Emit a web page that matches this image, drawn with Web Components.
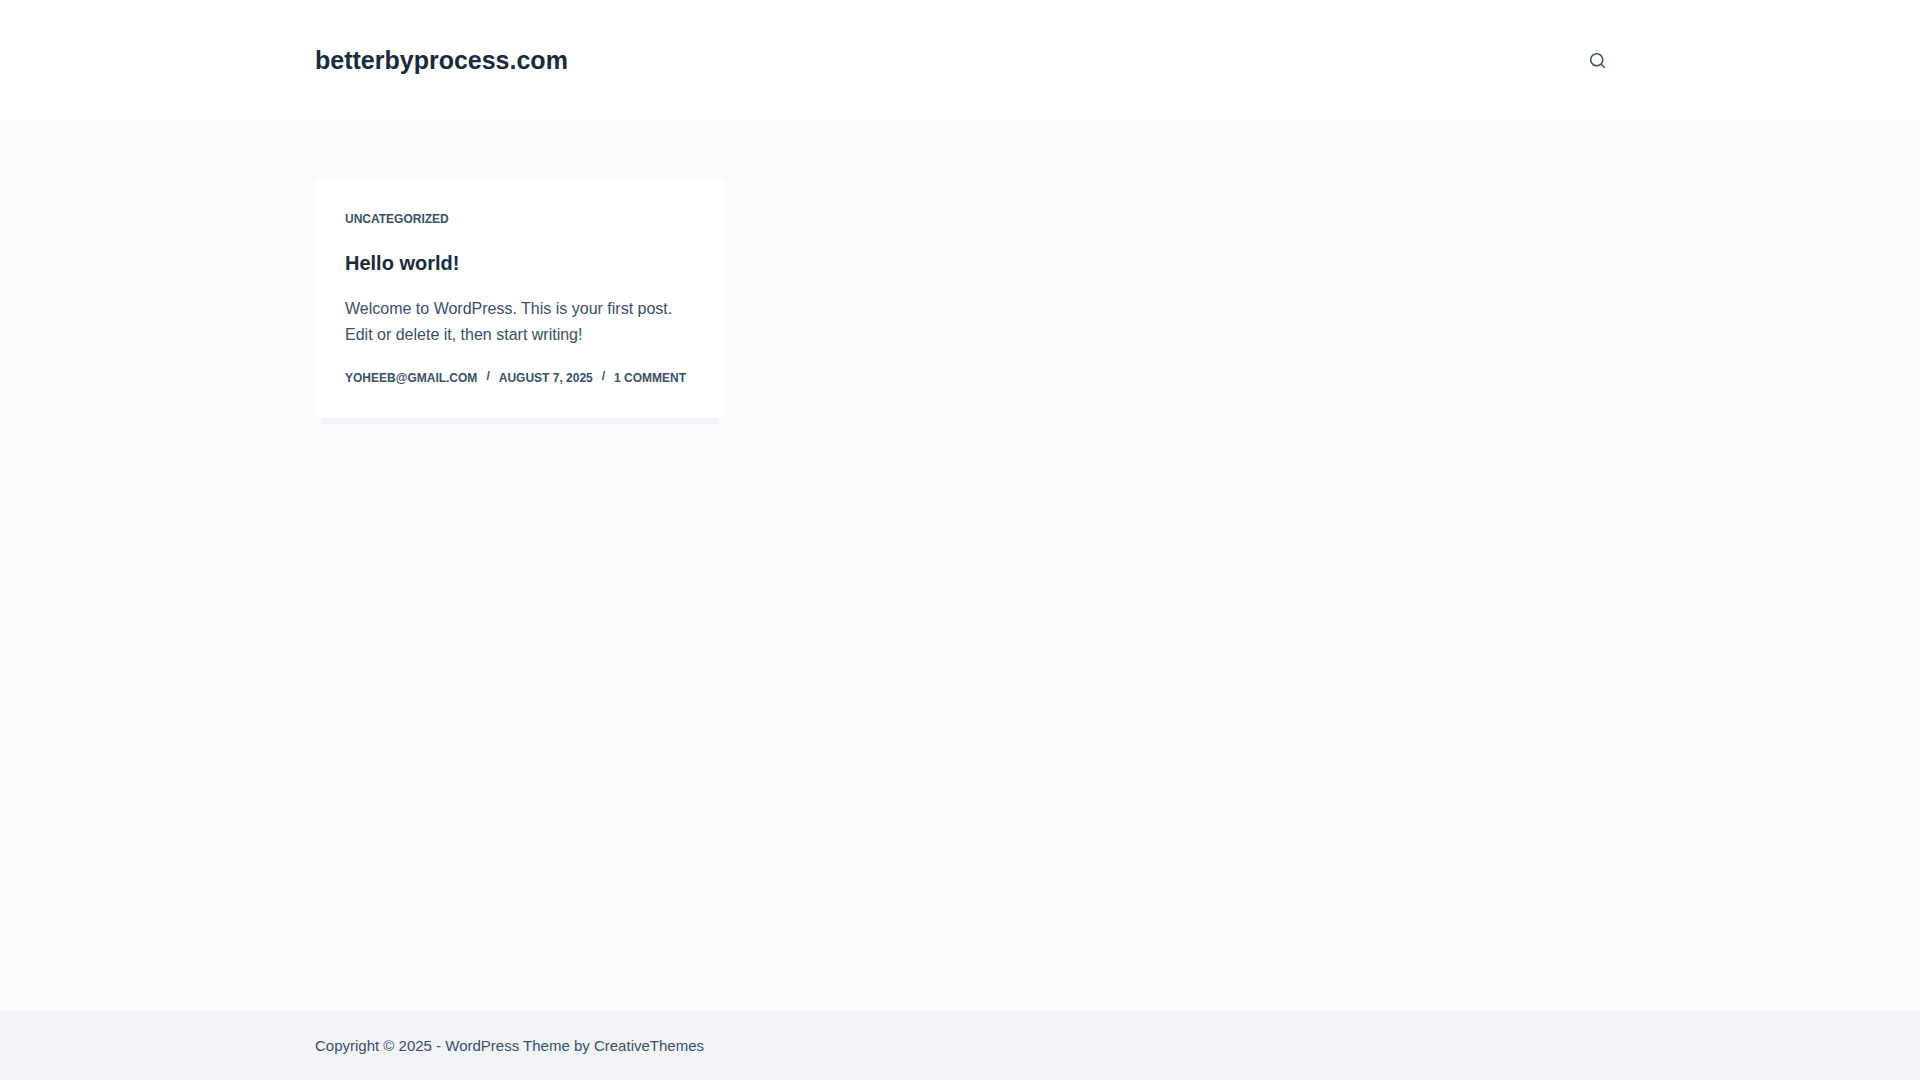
<!DOCTYPE html>
<html lang="en">
<head>
<meta charset="utf-8">
<meta name="viewport" content="width=device-width, initial-scale=1">
<title>betterbyprocess.com</title>
<style>
  :root { --text: #3a4f66; --heading: #192a3d; --surface: #fff; --page: #fafbfd; --footer: #f0f4f7; }
  body { margin: 0; background: var(--page); color: var(--text); font: 16px/26px "Liberation Sans", Arial, sans-serif; }
</style>
</head>
<body>
<site-page>
  <site-header slot="header">betterbyprocess.com</site-header>
  <post-grid>
    <post-card>
      <span slot="category">Uncategorized</span>
      <span slot="title">Hello world!</span>
      <span slot="excerpt">Welcome to WordPress. This is your first post. Edit or delete it, then start writing!</span>
      <span slot="author">yoheeb@gmail.com</span>
      <span slot="date">August 7, 2025</span>
      <span slot="comments">1 Comment</span>
    </post-card>
  </post-grid>
  <site-footer slot="footer"></site-footer>
</site-page>

<script>
const container = `.container { box-sizing: border-box; width: 88vw; max-width: 1290px; margin: 0 auto; }
  a { color: inherit; text-decoration: none; }`;

function define(name, html) {
  const template = document.createElement('template');
  template.innerHTML = html;
  customElements.define(name, class extends HTMLElement {
    constructor() {
      super();
      this.attachShadow({ mode: 'open' }).append(template.content.cloneNode(true));
    }
  });
}

define('site-page', `<style>
  :host { display: flex; flex-direction: column; min-height: 100vh; }
  main { flex: 1; padding: 60px 0; }
</style>
<slot name="header"></slot><main><slot></slot></main><slot name="footer"></slot>`);

define('site-header', `<style>
  ${container}
  :host { display: block; background: var(--surface); }
  .container { display: flex; align-items: center; justify-content: space-between; min-height: 120px; }
  .title { color: var(--heading); font-size: 25px; line-height: 37px; font-weight: 700; }
  button { display: flex; padding: 0; border: 0; background: none; color: var(--text); cursor: pointer; }
  svg { display: block; width: 15px; height: 15px; fill: currentColor; }
</style>
<header class="container">
  <a class="title" href="#"><slot></slot></a>
  <button type="button" aria-label="Search"><svg viewBox="0 0 15 15" aria-hidden="true"><path d="M14.8,13.7L12,11c0.9-1.2,1.5-2.6,1.5-4.2c0-3.7-3-6.8-6.8-6.8S0,3,0,6.8s3,6.8,6.8,6.8c1.6,0,3.1-0.6,4.2-1.5l2.8,2.8c0.1,0.1,0.3,0.2,0.5,0.2s0.4-0.1,0.5-0.2C15.1,14.5,15.1,14,14.8,13.7z M1.5,6.8c0-2.9,2.4-5.2,5.2-5.2S12,3.9,12,6.8S9.6,12,6.8,12S1.5,9.6,1.5,6.8z"/></svg></button>
</header>`);

define('post-grid', `<style>
  ${container}
  :host { display: block; }
  .container { display: grid; grid-template-columns: repeat(3, minmax(0, 1fr)); gap: 30px; }
  @media (max-width: 999px) { .container { grid-template-columns: repeat(2, minmax(0, 1fr)); } }
  @media (max-width: 689px) { .container { grid-template-columns: minmax(0, 1fr); } }
</style>
<div class="container"><slot></slot></div>`);

define('post-card', `<style>
  :host { display: block; }
  a { color: inherit; text-decoration: none; }
  article { display: flex; flex-direction: column; padding: 30px; background: var(--surface); border-radius: 2px; box-shadow: 0 12px 0 -6px rgba(34, 56, 101, .04); }
  .category, .meta { font-size: 12px; font-weight: 700; text-transform: uppercase; }
  .category { line-height: 18px; margin-bottom: 22px; }
  h2 { margin: 0 0 20px; color: var(--heading); font-size: 20px; line-height: 26px; }
  p { margin: 0 0 20px; }
  .meta { display: flex; flex-wrap: wrap; gap: 9px; line-height: 20px; }
  .separator { line-height: 16px; }
</style>
<article>
  <div class="category"><a href="#"><slot name="category"></slot></a></div>
  <h2><a href="#"><slot name="title"></slot></a></h2>
  <p><slot name="excerpt"></slot></p>
  <div class="meta">
    <a href="#"><slot name="author"></slot></a><span class="separator">/</span>
    <time datetime="2025-08-07"><slot name="date"></slot></time><span class="separator">/</span>
    <a href="#"><slot name="comments"></slot></a>
  </div>
</article>`);

define('site-footer', `<style>
  ${container}
  :host { display: block; background: var(--footer); font-size: 15px; line-height: 19px; }
  footer { padding: 25px 0; }
</style>
<footer class="container">Copyright © 2025 - WordPress Theme by <a href="#">CreativeThemes</a></footer>`);
</script>
</body>
</html>
